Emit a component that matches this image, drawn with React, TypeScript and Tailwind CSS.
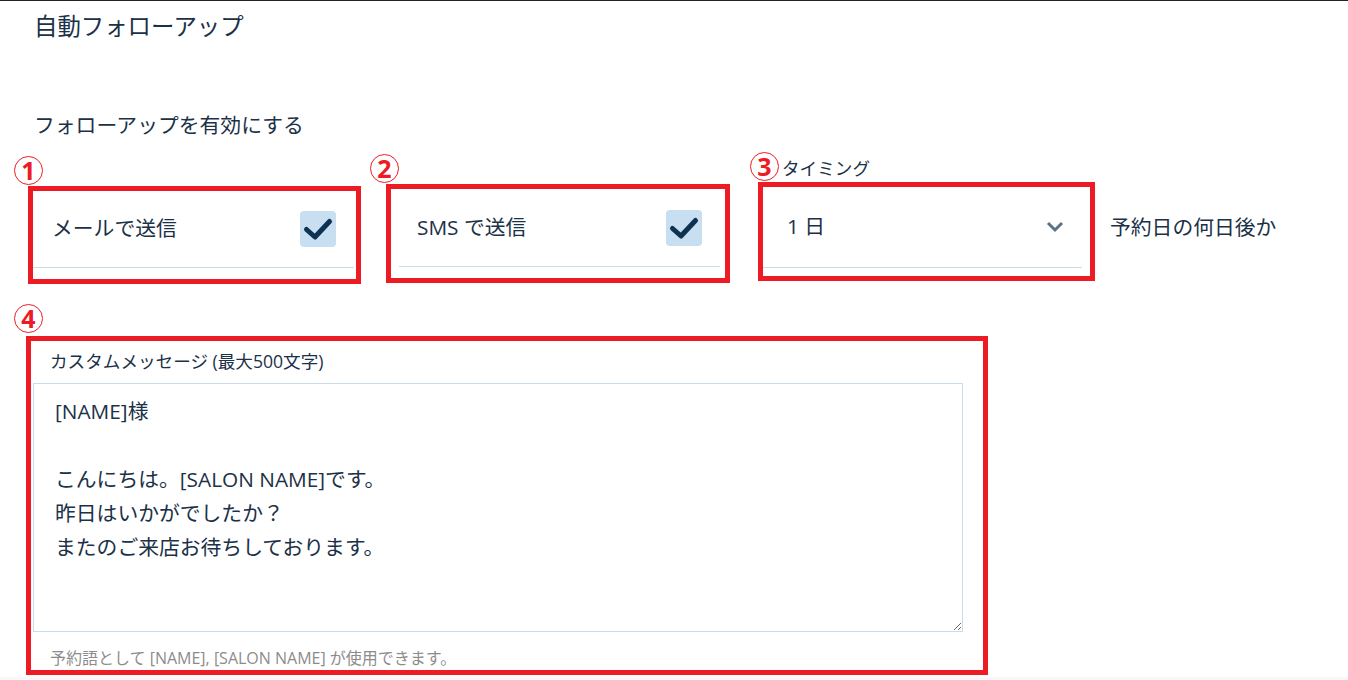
import React from 'react';

const Num: React.FC<{ n: string }> = ({ n }) => (
  <span className="flex h-[29px] w-[29px] items-center justify-center rounded-full border border-[#ed1c24] text-[25px] font-bold leading-none text-[#ed1c24]">
    {n}
  </span>
);

const CheckBox: React.FC = () => (
  <span className="flex h-[36px] w-[36px] items-center justify-center rounded-[4px] bg-[#c8def1]">
    <svg width="36" height="36" viewBox="0 0 36 36" fill="none">
      <path d="M6.5 18.5 L15 26 L29.5 10.5" stroke="#0d3252" strokeWidth="5" strokeLinecap="round" strokeLinejoin="round" />
    </svg>
  </span>
);

const App: React.FC = () => {
  return (
    <div className="h-[680px] overflow-hidden border-t border-[#222] bg-white font-['Open_Sans','Noto_Sans_CJK_JP',sans-serif] text-[#1b3147]">
      {/* Title */}
      <div className="flex h-[52px] items-center pl-[34px] text-[23.4px]">自動フォローアップ</div>

      <div className="mt-[58px] flex h-[30px] items-center pl-[34px] text-[20.8px]">フォローアップを有効にする</div>

      {/* Options row */}
      <div className="mt-[9px] flex items-start">
        {/* 1 */}
        <div className="ml-[14px] pt-[6px]">
          <div className="h-[30px]">
            <Num n="1" />
          </div>
          <div className="ml-[14px] h-[98px] w-[333px] border-[5px] border-[#ed1c24]">
            <div className="flex h-[77px] w-[321px] items-center justify-between border-b border-[#c8dcea] pl-[19px] pr-[18px] text-[20.8px]">
              <span>メールで送信</span>
              <CheckBox />
            </div>
          </div>
        </div>

        {/* 2 */}
        <div className="ml-[9px] pt-[4px]">
          <div className="h-[30px]">
            <Num n="2" />
          </div>
          <div className="ml-[16px] h-[99px] w-[344px] border-[5px] border-[#ed1c24]">
            <div className="ml-[8px] flex h-[78px] w-[321px] items-center justify-between border-b border-[#c8dcea] pl-[18px] pr-[18px] text-[20.8px]">
              <span>SMS で送信</span>
              <CheckBox />
            </div>
          </div>
        </div>

        {/* 3 */}
        <div className="ml-[20px]">
          <div className="flex h-[32px] items-center gap-[3px]">
            <Num n="3" />
            <span className="mt-[4px] text-[17.6px]">タイミング</span>
          </div>
          <div className="ml-[8px] h-[99px] w-[337px] border-[5px] border-[#ed1c24]">
            <div className="flex h-[81px] w-[319px] items-center justify-between border-b border-[#c8dcea] pl-[24px] pr-[18px] text-[20.8px]">
              <span>1 日</span>
              <svg width="18" height="12" viewBox="0 0 18 12" fill="none">
                <path d="M2 2 L9 9 L16 2" stroke="#5a7389" strokeWidth="3" />
              </svg>
            </div>
          </div>
        </div>

        <div className="ml-[15px] mt-[63px] flex h-[30px] items-center text-[20.8px]">予約日の何日後か</div>
      </div>

      {/* 4 */}
      <div className="ml-[14px] mt-[20px]">
        <div className="h-[32px]">
          <Num n="4" />
        </div>
        <div className="ml-[12px] h-[339px] w-[962px] overflow-hidden border-[5px] border-[#ed1c24]">
          <div className="flex h-[40px] items-center pl-[19px] text-[17.6px]">カスタムメッセージ (最大500文字)</div>
          <textarea
            className="ml-[2px] mt-[2px] block h-[249px] w-[930px] border border-[#c8dcea] px-[21px] py-[10px] text-[20.8px] leading-[34px] text-[#1b3147] outline-none"
            defaultValue={'[NAME]様\n\nこんにちは。[SALON NAME]です。\n昨日はいかがでしたか？\nまたのご来店お待ちしております。'}
          />
          <div className="pl-[19px] pt-[16px] text-[16px] leading-[20px] text-[#8c8c8c]">
            予約語として [NAME], [SALON NAME] が使用できます。
          </div>
        </div>
      </div>

      <div className="mt-[2px] h-[10px] bg-[#f8f8f8]" />
    </div>
  );
};

export default App;
